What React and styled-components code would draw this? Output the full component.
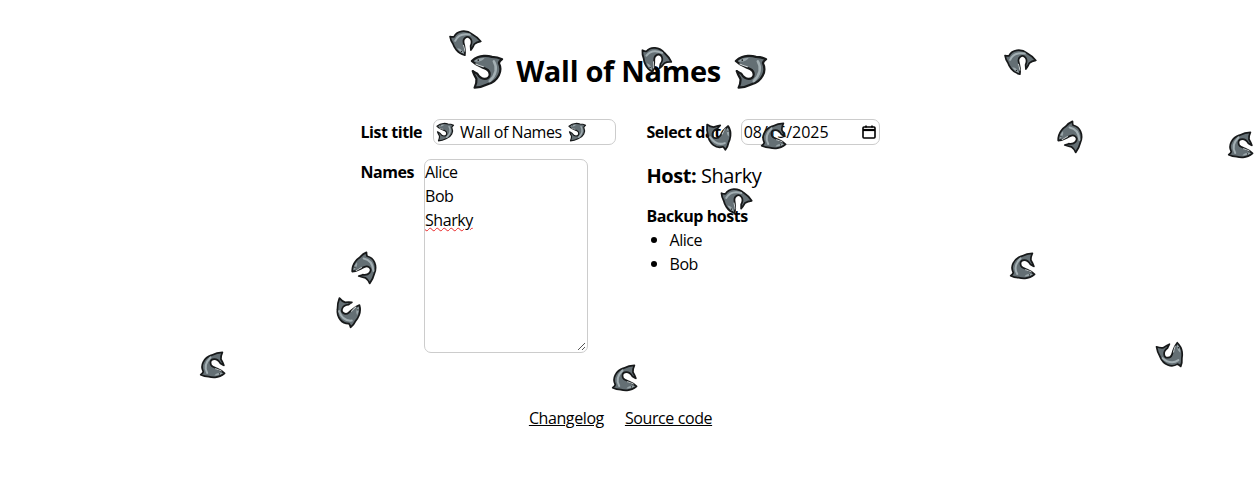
import React from "react";
import styled, { createGlobalStyle } from "styled-components";

const Global = createGlobalStyle`
  html, body { margin: 0; padding: 0; background: #fff; }
  body { font-family: "Open Sans", "Noto Sans", sans-serif; font-size: 16px; color: #000; }
`;
const Page = styled.div`
  position: relative; width: 1257px; height: 482px; overflow: hidden;
  display: flex; flex-direction: column; align-items: center; padding-top: 49px; box-sizing: border-box;
  letter-spacing: -0.45px;
`;
const Title = styled.h1`
  margin: 0 20px 0 0; display: flex; align-items: center; gap: 13px; height: 44px;
  font-size: 29px; font-weight: 700; letter-spacing: -0.3px; line-height: 44px;
`;
const SharkSvg = styled.svg`
  display: block; flex: none; overflow: visible;
`;
const FloatingSvg = styled(SharkSvg)`
  position: absolute; pointer-events: none;
`;
const Columns = styled.div`
  margin-top: 26px; margin-left: -17px; display: flex; gap: 31px; width: 519px; height: 234px;
`;
const LeftCol = styled.div`display: flex; flex-direction: column; width: 255px; gap: 14px;`;
const RightCol = styled.div`display: flex; flex-direction: column; flex: 1;`;
const Row = styled.div`display: flex; align-items: ${p => (p.$top ? "flex-start" : "center")}; gap: ${p => p.$gap}px;`;
const Label = styled.label`font-weight: 700; line-height: 24px; white-space: nowrap; padding-top: ${p => (p.$top ? 1 : 0)}px;`;
const FakeInput = styled.div`
  border: 1px solid #ccc; border-radius: 7px; box-sizing: border-box; height: 26px;
  display: flex; align-items: center; line-height: 24px; background: #fff; white-space: nowrap;
  width: ${p => p.$w}px;
`;
const TitleInput = styled(FakeInput)`padding-left: 2px; gap: 6px;`;
const DateInput = styled(FakeInput)`padding: 0 2px; justify-content: space-between; letter-spacing: 0;`;
const NamesArea = styled.div`
  position: relative; width: 164px; height: 194px; box-sizing: border-box; border: 1px solid #ccc; border-radius: 7px;
  line-height: 24px;
`;
const Line = styled.div`height: 24px;`;
const Squiggle = styled.span`
  text-decoration: underline wavy #e8282a 1px; text-underline-offset: 1px;
`;
const Resize = styled.svg`position: absolute; right: 1px; bottom: 1px;`;
const Host = styled.div`margin-top: 17px; font-size: 20px; line-height: 27px; b { font-weight: 700; }`;
const Backup = styled.div`margin-top: 15px; font-weight: 700; line-height: 24px;`;
const List = styled.ul`margin: 0; padding: 0 0 0 23px; line-height: 24px; list-style: none;`;
const Item = styled.li`
  position: relative;
  &::before {
    content: ""; position: absolute; left: -19px; top: 9px; width: 6px; height: 6px;
    border-radius: 50%; background: #000;
  }
`;
const Footer = styled.div`display: flex; gap: 21px; margin-left: -16px; margin-top: 53px; line-height: 24px; letter-spacing: -0.4px;`;
const Link = styled.a`color: #000; text-decoration: underline;`;

const SharkArt = ({ rot = 0 }) => (
  <g transform={`rotate(${rot} 18 18)`}>
    <path
      d="M2 6.5 C6 3 10 1.2 15 1 C18.5 .8 21.5 1.2 24 2 C27.5 2 31.5 2.8 35 4.6 C33.5 5.8 32 7.2 31.5 8.8 C33.6 13 33.6 18 31.5 22 C29 27 25 30 20 31.6 C15.5 33.8 10 35.4 5 35.6 C6.5 32.5 7.4 29.4 7 26 C5.5 23.5 4 20.5 3 17.5 C4.8 18.6 6.4 19.6 8 20.5 C10 24 13 26 16 26 C19 26 21.5 24 21.5 21 C21.5 18.5 20 16.5 18 15.5 C16 14.5 14.5 14 13 13.4 C9 11.8 5 9.5 2 6.5 Z"
      fill="#646f74" stroke="#17191a" strokeWidth="2.4" strokeLinejoin="round"
    />
    <path d="M4.5 6.8 C8 4 12 3 16 3.4 C14.5 5.6 12.5 6.6 10 7 C8 7.4 6 7.2 4.5 6.8 Z" fill="#9aa6aa" />
    <path d="M26 7 C29.6 13 29 21 21.5 28.5" fill="none" stroke="#a3afb3" strokeWidth="2.8" strokeLinecap="round" />
    <path d="M6 9.5 C8.5 11 12 12 15 13" fill="none" stroke="#cfd6d8" strokeWidth="1.3" />
    <circle cx="9" cy="5.6" r=".9" fill="#17191a" />
  </g>
);

const Shark = ({ size }) => (
  <SharkSvg viewBox="0 0 36 36" width={size} height={size}>
    <SharkArt />
  </SharkSvg>
);

const floats = [
  [465, 41, -125], [656, 58, -112], [1020, 60, -125], [1072, 137, -50], [1241, 145, 180],
  [718, 136, 100], [774, 136, 180], [736, 199, -120], [366, 268, -50], [1023, 266, 180],
  [347, 312, 115], [1170, 355, 85], [213, 365, 180], [625, 378, 180],
];

export default function App() {
  return (
    <Page>
      <Global />
      <Title>
        <Shark size={33} />
        <span>Wall of Names</span>
        <Shark size={33} />
      </Title>
      <Columns>
        <LeftCol>
          <Row $gap={11}>
            <Label>List title</Label>
            <TitleInput $w={183}>
              <Shark size={18} />
              <span>Wall of Names</span>
              <Shark size={18} />
            </TitleInput>
          </Row>
          <Row $top $gap={10}>
            <Label $top>Names</Label>
            <NamesArea>
              <Line>Alice</Line>
              <Line>Bob</Line>
              <Line><Squiggle>Sharky</Squiggle></Line>
              <Resize width="10" height="10" viewBox="0 0 10 10">
                <path d="M9 2 L2 9 M9 6 L6 9" stroke="#555" strokeWidth="1" fill="none" />
              </Resize>
            </NamesArea>
          </Row>
        </LeftCol>
        <RightCol>
          <Row $gap={11}>
            <Label>Select date</Label>
            <DateInput $w={139}>
              <span>08/15/2025</span>
              <svg width="16" height="16" viewBox="0 0 16 16">
                <rect x="2" y="3" width="12" height="11" rx="1" fill="none" stroke="#000" strokeWidth="1.6" />
                <path d="M2 6 H14" stroke="#000" strokeWidth="2.2" />
                <path d="M5 1.5 V3.5 M11 1.5 V3.5" stroke="#000" strokeWidth="1.6" />
              </svg>
            </DateInput>
          </Row>
          <Host><b>Host:</b> Sharky</Host>
          <Backup>Backup hosts</Backup>
          <List><Item>Alice</Item><Item>Bob</Item></List>
        </RightCol>
      </Columns>
      <Footer>
        <Link href="#">Changelog</Link>
        <Link href="#">Source code</Link>
      </Footer>
      {floats.map(([x, y, rot], i) => (
        <FloatingSvg key={i} viewBox="0 0 36 36" width="26" height="26" style={{ left: x - 13, top: y - 13 }}>
          <SharkArt rot={rot} />
        </FloatingSvg>
      ))}
    </Page>
  );
}
